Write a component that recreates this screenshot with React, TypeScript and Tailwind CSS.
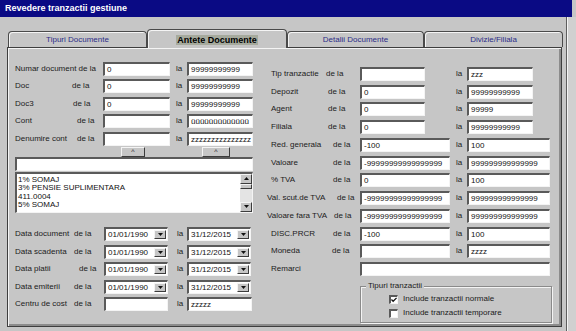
import React from 'react'

const field =
  'h-[14px] shrink-0 overflow-hidden whitespace-nowrap bg-white border-t-2 border-l-2 border-b border-r border-t-[#5a5a5a] border-l-[#5a5a5a] border-b-[#f4f4f4] border-r-[#f4f4f4] pl-[2px] text-[8px] leading-[11px] text-[#111]'

const raised =
  'bg-[#c6c6c6] border border-t-[#f4f4f4] border-l-[#f4f4f4] border-b-[#3c3c3c] border-r-[#3c3c3c]'

function Box({ w, v }: { w: string; v?: string }) {
  return <div className={`${field} ${w}`}>{v}</div>
}

function Arrow({ up }: { up?: boolean }) {
  return (
    <svg width="5" height="3" viewBox="0 0 5 3" className={up ? 'rotate-180' : ''}>
      <path d="M0 0h5L2.5 3z" fill="#111" />
    </svg>
  )
}

function DateBox({ w, v }: { w: string; v: string }) {
  return (
    <div className={`${field} ${w} flex items-center justify-between pr-[1px] text-[8.5px]`}>
      <span>{v}</span>
      <div className={`${raised} w-[12px] h-[9px] flex items-center justify-center`}>
        <Arrow />
      </div>
    </div>
  )
}

const leftRows = [
  { label: 'Numar document de la', lw: 'w-[88px]', de: '', a: '0', b: '99999999999' },
  { label: 'Doc', lw: 'w-[57px]', de: 'de la', a: '0', b: '99999999999' },
  { label: 'Doc3', lw: 'w-[58px]', de: 'de la', a: '0', b: '99999999999' },
  { label: 'Cont', lw: 'w-[62px]', de: 'de la', a: '', b: 'üüüüüüüüüüüüü' },
  { label: 'Denumire cont', lw: 'w-[62px]', de: 'de la', a: '', b: 'zzzzzzzzzzzzzzz' },
]

const dateRows = [
  { label: 'Data document', lw: 'w-[59px]' },
  { label: 'Data scadenta', lw: 'w-[59px]' },
  { label: 'Data platii', lw: 'w-[64px]' },
  { label: 'Data emiterii', lw: 'w-[59px]' },
]

const rightRows = [
  { label: 'Tip tranzactie', lw: 'w-[59px] pl-[4px]', a: '', b: 'zzz', wide: false },
  { label: 'Depozit', lw: 'w-[61px] pl-[4px]', a: '0', b: '99999999999', wide: false },
  { label: 'Agent', lw: 'w-[61px] pl-[4px]', a: '0', b: '99999', wide: false },
  { label: 'Filiala', lw: 'w-[61px] pl-[4px]', a: '0', b: '99999999999', wide: false },
  { label: 'Red. generala', lw: 'w-[66px] pl-[4px]', a: '-100', b: '100', wide: true },
  { label: 'Valoare', lw: 'w-[66px] pl-[4px]', a: '-99999999999999999', b: '999999999999999', wide: true },
  { label: '% TVA', lw: 'w-[66px] pl-[4px]', a: '0', b: '100', wide: true },
  { label: 'Val. scut.de TVA', lw: 'w-[70px]', a: '-99999999999999999', b: '999999999999999', wide: true },
  { label: 'Valoare fara TVA', lw: 'w-[67px]', a: '-99999999999999999', b: '999999999999999', wide: true },
  { label: 'DISC.PRCR', lw: 'w-[66px] pl-[4px]', a: '-100', b: '100', wide: true },
  { label: 'Moneda', lw: 'w-[65px] pl-[4px]', a: '', b: 'zzzz', wide: true },
]

const tabs = [
  { label: 'Tipuri Documente', w: 'w-[139px]' },
  { label: 'Antete Documente', w: 'w-[140px]', active: true },
  { label: 'Detalii Documente', w: 'w-[137px]' },
  { label: 'Divizie/Filiala', w: 'w-[139px]' },
]

const listItems = ['1% SOMAJ', '3% PENSIE SUPLIMENTARA', '411.0004', '5% SOMAJ']

function Check({ on, label }: { on?: boolean; label: string }) {
  return (
    <div className="flex items-center h-[14px] pl-[28px] gap-[5px]">
      <div className="w-[9px] h-[9px] bg-white border-t-2 border-l-2 border-b border-r border-t-[#5a5a5a] border-l-[#5a5a5a] border-b-[#f4f4f4] border-r-[#f4f4f4] flex items-center justify-center">
        {on && (
          <svg width="7" height="6" viewBox="0 0 7 6">
            <path d="M0.5 2.5L2.5 4.5L6.5 0.5" stroke="#111" strokeWidth="1.5" fill="none" />
          </svg>
        )}
      </div>
      <span>{label}</span>
    </div>
  )
}

export default function App() {
  return (
    <div className="w-[576px] h-[331px] bg-[#c6c6c6] flex flex-col overflow-hidden font-['Liberation_Sans',Arial,sans-serif] text-[8px] text-[#1b1b1b]">
      <div className="w-[572px] h-[17px] shrink-0 bg-[#0a0a84] flex items-center pl-[5px] text-[9px] font-bold text-white">
        Revedere tranzactii gestiune
      </div>

      <div className="flex flex-1">
        <div className="w-[566px] shrink-0">
          {/* tabs */}
          <div className="flex items-end pl-[8px] pt-[12px]">
            {tabs.map((t) =>
              t.active ? (
                <div
                  key={t.label}
                  className={`${t.w} h-[19px] -mb-px relative z-10 bg-[#c6c6c6] rounded-t-[4px] border border-b-0 border-[#4a4a4a] shadow-[inset_1px_1px_0_#f4f4f4] flex items-center justify-center pt-[1px]`}
                >
                  <span className="bg-[#a6aa9d] px-[1px] text-[9px] leading-[10px] font-bold text-black">{t.label}</span>
                </div>
              ) : (
                <div
                  key={t.label}
                  className={`${t.w} h-[16px] rounded-t-[4px] border border-b-0 border-[#4a4a4a] shadow-[inset_1px_1px_0_#f4f4f4] flex items-center justify-center text-[#2c2c86]`}
                >
                  {t.label}
                </div>
              )
            )}
          </div>

          {/* panel */}
          <div className="ml-[7px] w-[555px] h-[280px] border border-[#3e3e3e] shadow-[inset_1px_1px_0_#f4f4f4,inset_-2px_-2px_0_#8c8c8c] flex">
            {/* left column */}
            <div className="ml-[7px] w-[248px] pt-[12px] flex flex-col">
              {leftRows.map((r) => (
                <div key={r.label} className="flex items-center h-[17.5px]">
                  <div className="w-[88px] shrink-0 flex whitespace-nowrap">
                    <span className={`${r.lw} shrink-0`}>{r.label}</span>
                    <span>{r.de}</span>
                  </div>
                  <Box w="w-[67px]" v={r.a} />
                  <span className="w-[17px] shrink-0 pl-[6px]">la</span>
                  <Box w="w-[66px]" v={r.b} />
                </div>
              ))}

              <div className="flex h-[10px] -mt-px">
                <div className={`${raised} ml-[106px] w-[24px] flex items-center justify-center text-[7px] leading-[7px]`}>^</div>
                <div className={`${raised} ml-[57px] w-[28px] flex items-center justify-center text-[7px] leading-[7px]`}>^</div>
              </div>
              <div className={`${field} w-[238px]`} />
              <div className="w-[238px] h-[41px] mt-px bg-white border-t-2 border-l-2 border-b border-r border-t-[#5a5a5a] border-l-[#5a5a5a] border-b-[#f4f4f4] border-r-[#f4f4f4] flex">
                <div className="flex-1 pl-[1px] pt-[2px] text-[8px] leading-[8.5px] text-[#111]">
                  {listItems.map((it) => (
                    <div key={it}>{it}</div>
                  ))}
                </div>
                <div className="w-[12px] flex flex-col bg-[#e4e4e4]">
                  <div className={`${raised} h-[10px] flex items-center justify-center`}>
                    <Arrow up />
                  </div>
                  <div className={`${raised} h-[5px]`} />
                  <div className="flex-1" />
                  <div className={`${raised} h-[10px] flex items-center justify-center`}>
                    <Arrow />
                  </div>
                </div>
              </div>

              <div className="flex flex-col mt-[13px]">
                {dateRows.map((r) => (
                  <div key={r.label} className="flex items-center h-[17.5px]">
                    <div className="w-[89px] shrink-0 flex whitespace-nowrap">
                      <span className={`${r.lw} shrink-0`}>{r.label}</span>
                      <span>de la</span>
                    </div>
                    <DateBox w="w-[64px]" v="01/01/1990" />
                    <span className="w-[19px] shrink-0 pl-[9px]">la</span>
                    <DateBox w="w-[64px]" v="31/12/2015" />
                  </div>
                ))}
                <div className="flex items-center h-[17.5px]">
                  <div className="w-[89px] shrink-0 flex whitespace-nowrap">
                    <span className="w-[59px] shrink-0">Centru de cost</span>
                    <span>de la</span>
                  </div>
                  <Box w="w-[64px]" />
                  <span className="w-[19px] shrink-0 pl-[9px]">la</span>
                  <Box w="w-[65px]" v="zzzzz" />
                </div>
              </div>
            </div>

            {/* right column */}
            <div className="ml-[4px] flex-1 pt-[17px] flex flex-col">
              {rightRows.map((r) => (
                <div key={r.label} className="flex items-center h-[17.75px]">
                  <div className="w-[93px] shrink-0 flex whitespace-nowrap">
                    <span className={`${r.lw} shrink-0`}>{r.label}</span>
                    <span>de la</span>
                  </div>
                  {r.wide ? (
                    <>
                      <Box w="w-[90px]" v={r.a} />
                      <span className="w-[17px] shrink-0 pl-[6px]">la</span>
                      <Box w="w-[83px]" v={r.b} />
                    </>
                  ) : (
                    <>
                      <Box w="w-[65px]" v={r.a} />
                      <span className="w-[42px] shrink-0 pl-[31px]">la</span>
                      <Box w="w-[66px]" v={r.b} />
                    </>
                  )}
                </div>
              ))}
              <div className="flex items-center h-[17.75px]">
                <span className="w-[93px] shrink-0 pl-[4px]">Remarci</span>
                <Box w="w-[190px]" />
              </div>

              <fieldset className="ml-[93px] mt-[3px] w-[192px] h-[42px] border border-[#8a8a8a] shadow-[1px_1px_0_#f4f4f4,inset_1px_1px_0_#f4f4f4]">
                <legend className="ml-[5px] px-[2px] bg-[#c6c6c6] leading-[10px]">Tipuri tranzactii</legend>
                <div className="pt-[1px]">
                  <Check on label="Include tranzactii normale" />
                  <Check label="Include tranzactii temporare" />
                </div>
              </fieldset>
            </div>
          </div>
        </div>
        <div className="w-[1px] bg-[#5e5e5e]" />
        <div className="w-[1px] bg-[#f4f4f4]" />
        <div className="flex-1 bg-[#d0d0d0]" />
      </div>
    </div>
  )
}
